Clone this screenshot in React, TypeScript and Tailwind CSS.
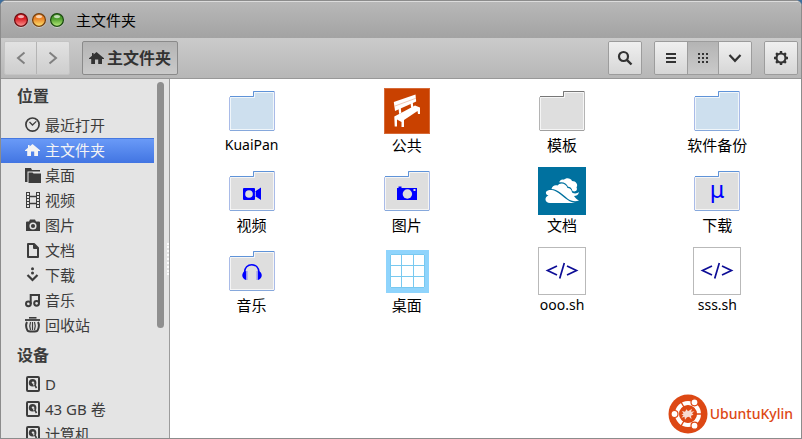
import { useState, type ReactNode } from "react";
import { clsx } from "clsx";

type IconProps = { children: ReactNode; className?: string };

function Icon16({ children, className }: IconProps) {
  return (
    <svg viewBox="0 0 16 16" aria-hidden="true" className={clsx("w-4 h-4 flex-shrink-0", className)}>
      {children}
    </svg>
  );
}

const homeShape = <path d="M7.5 2 15 8.2v.8h-2v5H9.2V9.5H6V14H2.2V9H0v-.8L3 5.8V3h1.6v1.4z" fill="currentColor" />;

const diskShape = (
  <>
    <rect x="2" y="1" width="12" height="14" rx="1" fill="none" stroke="currentColor" strokeWidth="2" />
    <circle cx="7.6" cy="6.8" r="3.8" fill="currentColor" />
    <circle cx="8" cy="6.6" r="1.2" fill="#e4e4e4" />
    <path d="M8.5 7.5 11 12.5" stroke="#e4e4e4" strokeWidth="1.6" />
    <path d="M9.5 8.5 11.5 12" stroke="currentColor" strokeWidth="1.6" />
  </>
);

const places = [
  {
    title: "最近打开",
    icon: (
      <g fill="none" stroke="currentColor">
        <circle cx="7.5" cy="7.6" r="6.6" strokeWidth="1.7" />
        <path d="M4.5 5 7.5 8l3.8-3.6" strokeWidth="1.3" />
      </g>
    ),
  },
  { title: "主文件夹", icon: homeShape },
  {
    title: "桌面",
    icon: <path d="M0 1h6l1 2h8v1.5H2.5V15H0zM3.5 5.5h4l1 1H16V16H3.5z" fill="currentColor" />,
  },
  {
    title: "视频",
    icon: (
      <g fill="none" stroke="currentColor">
        <path d="M1.5 0v16M4.5 0v16M11.5 0v16M14.5 0v16" />
        <path d="M3 0v16M13 0v16" strokeWidth="2" strokeDasharray="1 2" />
        <path d="M4 4.5h8M4 11.5h8" strokeWidth="1.4" />
      </g>
    ),
  },
  {
    title: "图片",
    icon: (
      <>
        <path d="M5 2.5h5l1 2h3a1 1 0 0 1 1 1V14H1V5.5a1 1 0 0 1 1-1h2z" fill="currentColor" />
        <circle cx="8" cy="9" r="2.8" fill="none" stroke="#e4e4e4" strokeWidth="1.5" />
      </>
    ),
  },
  {
    title: "文档",
    icon: <path d="M3 2h6l4 4v9H3zM9 2v4h4" fill="none" stroke="currentColor" strokeWidth="2" strokeLinejoin="round" />,
  },
  {
    title: "下载",
    icon: (
      <>
        <circle cx="7.5" cy="1.8" r="1.5" fill="currentColor" />
        <circle cx="7.5" cy="6" r="1.5" fill="currentColor" />
        <path d="M2.5 8l5 5 5-5" fill="none" stroke="currentColor" strokeWidth="2.2" />
      </>
    ),
  },
  {
    title: "音乐",
    icon: (
      <g fill="none" stroke="currentColor" strokeWidth="2">
        <path d="M5.7 12V3H14v8" />
        <circle cx="3.4" cy="11.8" r="2.4" />
        <circle cx="11.6" cy="11.3" r="2.4" />
      </g>
    ),
  },
  {
    title: "回收站",
    icon: (
      <g fill="none" stroke="currentColor">
        <path d="M4 .8h7.5" strokeWidth="1.6" />
        <path d="M0 3h15" strokeWidth="1.8" />
        <path d="M2 5Q0 9 2.5 13.5Q3 14.5 7.5 14.5T12.5 13.5Q15 9 13 5" strokeWidth="2" />
        <path d="M5.5 5q-1.4 3.5 0 8M9.5 5q1.4 3.5 0 8M7.5 5v8" strokeWidth="1.2" />
      </g>
    ),
  },
];

const devices = [
  { title: "D", icon: diskShape },
  { title: "43 GB 卷", icon: diskShape },
  { title: "计算机", icon: diskShape },
];

function Folder({ tone, children }: { tone: "blue" | "home" | "gray"; children?: ReactNode }) {
  const fill = tone === "blue" ? "#cddfee" : "#dedede";
  const side = tone === "gray" ? "#b4b4b4" : "#a9bbe8";
  const top = tone === "gray" ? "#777777" : "#5f93d8";
  return (
    <svg viewBox="0 0 48 48" className="w-12 h-12" aria-hidden="true">
      <path d="M1.5 10.5 2.5 9.5H25.5V4.5H46.5V43L45.5 43.5H2.5L1.5 43z" fill={fill} stroke={side} />
      <path d="M2.5 43V10.5H26.5V5.5H45.5V42.5H2.5" fill="none" stroke="#ffffff" strokeOpacity="0.7" />
      <path d="M2 9.5H25.5V4.5H46" fill="none" stroke={top} />
      <path d="M2 43.5H46" fill="none" stroke={tone === "gray" ? "#a0a0a0" : "#86a8dc"} />
      {children}
    </svg>
  );
}

function Bench() {
  return (
    <svg viewBox="0 0 48 48" className="w-12 h-12" aria-hidden="true">
      <rect x="1" y="1" width="46" height="46" fill="#c94100" />
      <rect x="1.5" y="1.5" width="45" height="45" fill="none" stroke="#d66a38" />
      <g fill="#ffffff">
        <path d="M10.8 15 32.5 7.6 33.2 14.6 12 24z" />
        <path d="M15.5 21l2.2-1 .6 6-2.2 1zM27.5 16l2.200-1 .6 5-2.200 1z" />
        <path d="M11.3 29.5 17 26.5 32 18.5 37 20.5V27h-2l-.5-3L21 33v7h-2.5v-5L14 32.5V39.5h-2.3z" />
      </g>
      <path d="M11.5 19.2 33 11.2" stroke="#e7a07f" strokeWidth=".6" />
    </svg>
  );
}

function Cloud() {
  return (
    <svg viewBox="0 0 48 48" className="w-12 h-12" aria-hidden="true">
      <rect width="48" height="48" fill="#00719f" />
      <g fill="#ffffff">
        <path d="M21.5 15.5C21 13.5 24 11.8 26 12.8C28 10.2 33 11 34 14C38 14 40.5 17.5 38.5 20.5C40 23 37.5 25.5 34.5 24C34 21 31.5 19.5 30 19.8C29 16.5 25 14.5 21.5 15.5z" />
        <path d="M13.5 22C14 19 17 17.5 19.5 18.5C22 15 28 16 29.5 21C32 21 34 23 34 25.5C36.5 27 39.5 26.5 41 25C40.5 28 38 29 36 29C37.5 31 39 32.5 41 33.5C37 35 33 34 29.5 31.5C24.5 27 19.5 22.5 13.5 22z" />
        <path d="M8 25C10 22.5 14 22.5 18 24.5C25 28 29 35 37 36H12C6.5 36 6 30 10.5 28.5C8.5 28 7.5 26.5 8 25z" />
      </g>
    </svg>
  );
}

function DesktopGrid() {
  return (
    <svg viewBox="0 0 48 48" className="w-12 h-12" aria-hidden="true">
      <rect x="3" y="3" width="43" height="43" fill="#8fd4fc" />
      <rect x="7" y="7" width="35" height="34" fill="#ffffff" />
      <path d="M7.5 7.5h34v33h-34zM18.5 7v34M30.5 7v34M7 18.5h35M7 29.5h35" fill="none" stroke="#78c9f0" />
    </svg>
  );
}

function Script() {
  return (
    <svg viewBox="0 0 48 48" className="w-12 h-12" aria-hidden="true">
      <rect x=".5" y=".5" width="47" height="47" fill="#ffffff" stroke="#b9b9b9" />
      <path d="M19 19 9.5 23.5 19 28M29 19l9.5 4.5L29 28M26.3 16l-4.6 15.5" fill="none" stroke="#0d0d96" strokeWidth="1.7" />
    </svg>
  );
}

const files = [
  { title: "KuaiPan", icon: <Folder tone="blue" /> },
  { title: "公共", icon: <Bench /> },
  { title: "模板", icon: <Folder tone="gray" /> },
  { title: "软件备份", icon: <Folder tone="blue" /> },
  {
    title: "视频",
    icon: (
      <Folder tone="home">
        <path d="M16 21h10q1 0 1 1v2.5l6-4v12.5l-6-4V32q0 1-1 1H16q-1 0-1-1V22q0-1 1-1z" fill="#0000ff" />
        <path d="M27.4 24.5v4.5" stroke="#dedede" strokeWidth=".8" />
        <circle cx="21" cy="27" r="3.8" fill="#dedede" />
      </Folder>
    ),
  },
  {
    title: "图片",
    icon: (
      <Folder tone="home">
        <path d="M14 21h1.5v-1.5h3V21H34v12H14z" fill="#0000ff" />
        <circle cx="24.4" cy="27" r="4.7" fill="#dedede" />
        <rect x="30.5" y="22" width="2" height="2" fill="#dedede" />
      </Folder>
    ),
  },
  { title: "文档", icon: <Cloud /> },
  {
    title: "下载",
    icon: (
      <Folder tone="home">
        <text x="24" y="31" textAnchor="middle" fontSize="23" fill="#0000ff" fontFamily="'DejaVu Sans', sans-serif">
          μ
        </text>
      </Folder>
    ),
  },
  {
    title: "音乐",
    icon: (
      <Folder tone="home">
        <path d="M16.5 26C16 15 31.5 15 31 26" fill="none" stroke="#0000ff" strokeWidth="1.5" />
        <path d="M18 24C13 25 13 31.5 18 33zM30 24c5 1 5 7.5 0 9z" fill="#0000ff" />
        <path d="M18.8 24v9M29.2 24v9" stroke="#9696ee" strokeWidth="1.5" />
      </Folder>
    ),
  },
  { title: "桌面", icon: <DesktopGrid /> },
  { title: "ooo.sh", icon: <Script /> },
  { title: "sss.sh", icon: <Script /> },
];

const lights = [
  { label: "关闭", id: "close", edge: "#6b0f12", main: "#d81e24", glow: "#ff9c98" },
  { label: "最小化", id: "min", edge: "#74400f", main: "#ea8428", glow: "#ffe873" },
  { label: "最大化", id: "max", edge: "#1c4a12", main: "#4c9c2c", glow: "#bdf07e" },
];

function WindowLight({ label, id, edge, main, glow }: (typeof lights)[number]) {
  return (
    <button aria-label={label} className="w-4 h-4">
      <svg viewBox="0 0 16 16" className="w-4 h-4">
        <defs>
          <linearGradient id={id} x1="0" y1="0" x2="0" y2="1">
            <stop offset="0.4" stopColor={main} />
            <stop offset="1" stopColor={glow} />
          </linearGradient>
        </defs>
        <circle cx="8" cy="8.7" r="7.2" fill="#cfcfcf" />
        <circle cx="8" cy="8" r="6.4" fill={`url(#${id})`} stroke={edge} strokeWidth="1.3" />
        <ellipse cx="8" cy="4.6" rx="3" ry="1.7" fill="#ffffff" fillOpacity="0.65" />
      </svg>
    </button>
  );
}

const raised = "bg-linear-to-b from-[#f0f0f0] to-[#d6d6d6] text-[#333333]";
const pressed = "bg-linear-to-b from-[#b4b4b4] to-[#cacaca] text-[#333333]";
const frame = "h-[34px] flex rounded-xs border border-[#9c9c9c] overflow-hidden";

function SideList({
  heading,
  items,
  active,
  onPick,
}: {
  heading: string;
  items: { title: string; icon: ReactNode }[];
  active: string;
  onPick: (title: string) => void;
}) {
  return (
    <section>
      <h2 className="pl-4 h-[34px] leading-[34px] text-base font-bold text-[#3c3c3c]">{heading}</h2>
      <ul>
        {items.map((item) => (
          <li key={item.title}>
            <a
              href="#"
              onClick={() => onPick(item.title)}
              className={clsx(
                "flex items-start gap-1 pl-6 h-[25px] leading-[25px] whitespace-nowrap",
                item.title === active
                  ? "bg-linear-to-b from-[#6b9bf8] to-[#4275e2] inset-shadow-[0_1px_0_#4578e0] text-[#f4f4f4]"
                  : "text-[#3c3c3c]"
              )}
            >
              <Icon16 className="mt-1">{item.icon}</Icon16>
              <span>{item.title}</span>
            </a>
          </li>
        ))}
      </ul>
    </section>
  );
}

function KylinLogo() {
  return (
    <div className="absolute right-2 bottom-1 flex items-center gap-0.5 text-[#dd4814]">
      <svg viewBox="0 0 40 40" className="w-10 h-10" aria-hidden="true">
        <circle cx="20" cy="20" r="19.5" fill="#dd4814" />
        <circle cx="20" cy="20" r="11" fill="none" stroke="#ffffff" strokeWidth="4" />
        <g stroke="#dd4814" strokeWidth="1.4">
          <path d="M20 20H34M20 20 13 8M20 20 13 32" />
        </g>
        <circle cx="20" cy="20" r="8.6" fill="#dd4814" />
        <g fill="#ffffff" stroke="#dd4814" strokeWidth="1.2">
          <circle cx="6.5" cy="20" r="3.5" />
          <circle cx="26.5" cy="8.3" r="3.5" />
          <circle cx="26.5" cy="31.7" r="3.5" />
        </g>
        <path
          d="M14 17l3 .8 1.5-2.5 1.5 2 4-2.500-1 3 3.500-.5-2.500 2 1.500 1.500-2.500 1 .5 3.500-2.500-2.500-2 .5-2 2.500-.5-3-3 1 2-2.500-2-.8 2-1z"
          fill="#ffffff"
          fillOpacity="0.8"
        />
      </svg>
      <span className="text-sm font-medium leading-5">UbuntuKylin</span>
    </div>
  );
}

export default function App() {
  const [place, setPlace] = useState("主文件夹");

  return (
    <div className="h-screen bg-[#3f6f9e] text-[15px] font-['Noto_Sans','Noto_Sans_CJK_SC',sans-serif]">
      <div className="h-full flex flex-col rounded-t-md border border-[#8c8c8c] overflow-hidden bg-white">
        {/* Title bar */}
        <header className="h-[37px] flex-shrink-0 flex items-center pl-3 border-t border-[#dcdcdc] bg-linear-to-b from-[#b8b8b8] to-[#a3a3a3]">
          <div className="flex gap-0.5">
            {lights.map((light) => (
              <WindowLight key={light.id} {...light} />
            ))}
          </div>
          <h1 className="ml-[11px] leading-5 text-black">主文件夹</h1>
        </header>

        {/* Toolbar */}
        <div className="h-[41px] flex-shrink-0 flex items-center justify-between px-[3px] pb-px border-b border-[#989898] bg-linear-to-b from-[#cbcbcb] to-[#b7b7b7]">
          <div className="flex gap-3">
            <div className="h-[34px] flex rounded-xs border border-[#c4c4c4] divide-x divide-[#b4b4b4] overflow-hidden text-[#808080]">
              <button aria-label="后退" className="w-8 flex items-center justify-center bg-linear-to-b from-[#e2e2e2] to-[#cecece]">
                <Icon16>
                  <path d="M11.5 2.5 5 8l6.5 5.5" fill="none" stroke="currentColor" strokeWidth="2" />
                </Icon16>
              </button>
              <button aria-label="前进" className="w-8 flex items-center justify-center bg-linear-to-b from-[#e2e2e2] to-[#cecece]">
                <Icon16>
                  <path d="M4.5 2.5 11 8l-6.5 5.5" fill="none" stroke="currentColor" strokeWidth="2" />
                </Icon16>
              </button>
            </div>
            <button className="h-[34px] px-1.5 flex items-center gap-0.5 rounded-xs border border-[#8a8a8a] bg-linear-to-b from-[#b4b4b4] to-[#cacaca] text-[#333333]">
              <Icon16>{homeShape}</Icon16>
              <span className="text-base font-bold leading-5">主文件夹</span>
            </button>
          </div>

          <div className="flex gap-3">
            <div className={frame}>
              <button aria-label="搜索" className={clsx("w-8 flex items-center justify-center", raised)}>
                <Icon16>
                  <circle cx="6.5" cy="6.5" r="4.5" fill="none" stroke="currentColor" strokeWidth="2.2" />
                  <path d="m9.8 9.8 4.7 4.7" stroke="currentColor" strokeWidth="2.4" />
                </Icon16>
              </button>
            </div>
            <div className={frame}>
              <button aria-label="列表视图" className={clsx("w-8 flex items-center justify-center", raised)}>
                <Icon16>
                  <path d="M3 4h10M3 8h10M3 12h10" stroke="currentColor" strokeWidth="2" />
                </Icon16>
              </button>
              <button aria-label="图标视图" className={clsx("w-8 flex items-center justify-center border-x border-[#9c9c9c]", pressed)}>
                <Icon16>
                  <path d="M3 4h10M3 8h10M3 12h10" stroke="currentColor" strokeWidth="2" strokeDasharray="2 2" />
                </Icon16>
              </button>
              <button aria-label="视图选项" className={clsx("w-8 flex items-center justify-center", raised)}>
                <Icon16>
                  <path d="m2.5 5 5.5 5.8L13.5 5" fill="none" stroke="currentColor" strokeWidth="2.2" />
                </Icon16>
              </button>
            </div>
            <div className={frame}>
              <button aria-label="设置" className={clsx("w-8 flex items-center justify-center", raised)}>
                <Icon16>
                  <path
                    d="M8 1v3M8 12v3M1 8h3M12 8h3M3.1 3.1l2 2M10.9 10.9l2 2M3.1 12.9l2-2M10.9 5.1l2-2"
                    stroke="currentColor"
                    strokeWidth="2.4"
                  />
                  <circle cx="8" cy="8" r="4.5" fill="#e3e3e3" stroke="currentColor" strokeWidth="2.2" />
                </Icon16>
              </button>
            </div>
          </div>
        </div>

        <div className="flex flex-1 min-h-0">
          {/* Sidebar */}
          <aside className="relative w-[169px] flex-shrink-0 flex border-r border-[#9c9c9c] bg-[#e4e4e4] overflow-hidden">
            <nav className="flex-1">
              <SideList heading="位置" items={places} active={place} onPick={setPlace} />
              <SideList heading="设备" items={devices} active={place} onPick={setPlace} />
            </nav>
            <div className="w-[15px] px-[3px] pt-[3px]">
              <div className="w-[7px] h-[246px] rounded-full bg-[#8f8f8f]" />
            </div>
            <div className="absolute right-0 top-[164px] h-8 border-r-2 border-dotted border-white" />
          </aside>

          {/* Files */}
          <main className="relative flex-1 pl-1 pr-1.5 pt-2 bg-white">
            <ul className="grid grid-cols-4">
              {files.map((file) => (
                <li key={file.title} className="h-20 flex justify-center">
                  <a href="#" className="flex flex-col items-center text-black">
                    {file.icon}
                    <span className={clsx("leading-5", /^[a-z.]+$/i.test(file.title) && "text-sm")}>{file.title}</span>
                  </a>
                </li>
              ))}
            </ul>
            <KylinLogo />
          </main>
        </div>
      </div>
    </div>
  );
}
